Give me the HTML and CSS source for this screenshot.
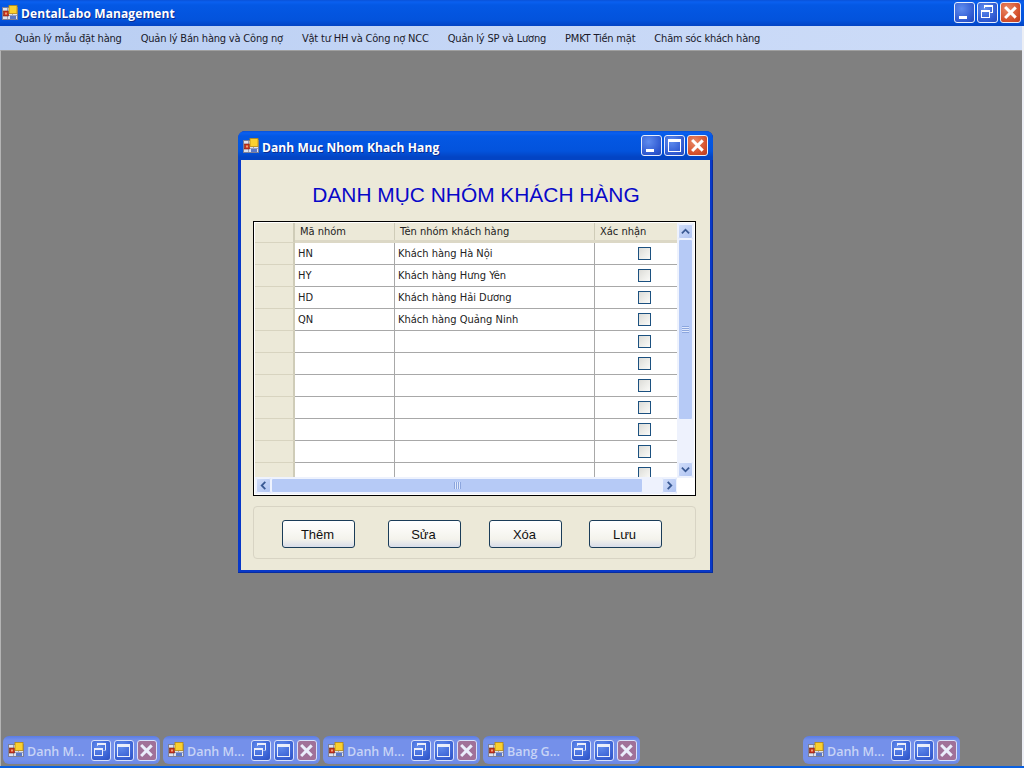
FILE: index.html
```html
<!DOCTYPE html>
<html lang="vi">
<head>
  <meta charset="UTF-8">
  <title>DentalLabo Management</title>
  <link rel="stylesheet" href="styles.css">
</head>
<body>
  <!-- shared window icon -->
  <svg class="defs" width="0" height="0">
    <symbol id="app-icon" viewBox="0 0 16 16">
      <rect x="0.5" y="2.5" width="15" height="12" fill="#dfe3ee" stroke="#7c7f98"/>
      <path d="M1 10.5h14M5.500 3v11M10.500 9v5" stroke="#9aa0bc" fill="none"/>
      <rect x="1.500" y="6" width="5" height="5" fill="#c8301c" stroke="#782010" stroke-width="0.6"/>
      <rect x="3" y="7.500" width="2" height="2" fill="#f0a070"/>
      <rect x="7" y="0.500" width="8" height="8" fill="#fad030" stroke="#b88810" stroke-width="0.8"/>
      <rect x="8" y="11" width="6" height="3" fill="#5a78c8"/>
    </symbol>
  </svg>

  <div class="app">
    <header class="titlebar">
      <svg class="win-icon"><use href="#app-icon"/></svg>
      <span class="title-text">DentalLabo Management</span>
      <div class="win-btns">
        <span class="win-btn"><i class="g-min"></i></span>
        <span class="win-btn"><i class="g-restore"></i></span>
        <span class="win-btn close"><i class="g-x"></i></span>
      </div>
    </header>

    <nav class="menubar">
      <a>Quản lý mẫu đặt hàng</a>
      <a>Quản lý Bán hàng và Công nợ</a>
      <a>Vật tư HH và Công nợ NCC</a>
      <a>Quản lý SP và Lương</a>
      <a>PMKT Tiền mặt</a>
      <a>Chăm sóc khách hàng</a>
    </nav>

    <main class="mdi">
      <!-- open child window -->
      <section class="dialog">
        <div class="titlebar dialog-title">
          <svg class="win-icon"><use href="#app-icon"/></svg>
          <span class="title-text">Danh Muc Nhom Khach Hang</span>
          <div class="win-btns">
            <span class="win-btn"><i class="g-min"></i></span>
            <span class="win-btn"><i class="g-max"></i></span>
            <span class="win-btn close"><i class="g-x"></i></span>
          </div>
        </div>
        <div class="dialog-body">
          <h1 class="heading">DANH MỤC NHÓM KHÁCH HÀNG</h1>

          <div class="grid-box">
            <div class="grid-top">
              <div class="grid-view">
                <table class="grid">
                  <colgroup>
                    <col class="c-head"><col class="c-ma"><col class="c-ten"><col class="c-xn">
                  </colgroup>
                  <thead>
                    <tr><th class="row-head"></th><th>Mã nhóm</th><th>Tên nhóm khách hàng</th><th>Xác nhận</th></tr>
                  </thead>
                  <tbody>
                    <tr><td class="row-head"></td><td>HN</td><td>Khách hàng Hà Nội</td><td><span class="check"></span></td></tr>
                    <tr><td class="row-head"></td><td>HY</td><td>Khách hàng Hưng Yên</td><td><span class="check"></span></td></tr>
                    <tr><td class="row-head"></td><td>HD</td><td>Khách hàng Hải Dương</td><td><span class="check"></span></td></tr>
                    <tr><td class="row-head"></td><td>QN</td><td>Khách hàng Quảng Ninh</td><td><span class="check"></span></td></tr>
                    <tr><td class="row-head"></td><td></td><td></td><td><span class="check"></span></td></tr>
                    <tr><td class="row-head"></td><td></td><td></td><td><span class="check"></span></td></tr>
                    <tr><td class="row-head"></td><td></td><td></td><td><span class="check"></span></td></tr>
                    <tr><td class="row-head"></td><td></td><td></td><td><span class="check"></span></td></tr>
                    <tr><td class="row-head"></td><td></td><td></td><td><span class="check"></span></td></tr>
                    <tr><td class="row-head"></td><td></td><td></td><td><span class="check"></span></td></tr>
                    <tr><td class="row-head"></td><td></td><td></td><td><span class="check"></span></td></tr>
                  </tbody>
                </table>
              </div>
              <div class="vscroll">
                <span class="sb-btn"><svg viewBox="0 0 10 6"><path d="M1 5l4-4 4 4" /></svg></span>
                <span class="sb-thumb v"><i class="grip-v"></i></span>
                <span class="sb-track"></span>
                <span class="sb-btn"><svg viewBox="0 0 10 6"><path d="M1 1l4 4 4-4" /></svg></span>
              </div>
            </div>
            <div class="hscroll">
              <span class="sb-btn"><svg viewBox="0 0 6 10"><path d="M5 1L1 5l4 4" /></svg></span>
              <span class="sb-thumb h"><i class="grip-h"></i></span>
              <span class="sb-track"></span>
              <span class="sb-btn"><svg viewBox="0 0 6 10"><path d="M1 1l4 4-4 4" /></svg></span>
              <span class="sb-corner"></span>
            </div>
          </div>

          <div class="group">
            <button class="btn b1">Thêm</button>
            <button class="btn b2">Sửa</button>
            <button class="btn b3">Xóa</button>
            <button class="btn b4">Lưu</button>
          </div>
        </div>
      </section>

      <!-- minimized child windows -->
      <div class="min-strip">
        <div class="min-win">
          <svg class="win-icon"><use href="#app-icon"/></svg><span class="min-text">Danh M...</span>
          <span class="win-btn"><i class="g-restore"></i></span><span class="win-btn"><i class="g-max"></i></span><span class="win-btn close"><i class="g-x"></i></span>
        </div>
        <div class="min-win">
          <svg class="win-icon"><use href="#app-icon"/></svg><span class="min-text">Danh M...</span>
          <span class="win-btn"><i class="g-restore"></i></span><span class="win-btn"><i class="g-max"></i></span><span class="win-btn close"><i class="g-x"></i></span>
        </div>
        <div class="min-win">
          <svg class="win-icon"><use href="#app-icon"/></svg><span class="min-text">Danh M...</span>
          <span class="win-btn"><i class="g-restore"></i></span><span class="win-btn"><i class="g-max"></i></span><span class="win-btn close"><i class="g-x"></i></span>
        </div>
        <div class="min-win">
          <svg class="win-icon"><use href="#app-icon"/></svg><span class="min-text">Bang G...</span>
          <span class="win-btn"><i class="g-restore"></i></span><span class="win-btn"><i class="g-max"></i></span><span class="win-btn close"><i class="g-x"></i></span>
        </div>
        <div class="min-win skip-slot">
          <svg class="win-icon"><use href="#app-icon"/></svg><span class="min-text">Danh M...</span>
          <span class="win-btn"><i class="g-restore"></i></span><span class="win-btn"><i class="g-max"></i></span><span class="win-btn close"><i class="g-x"></i></span>
        </div>
      </div>
    </main>
  </div>
</body>
</html>
```

FILE: styles.css
```css
/* Global */
html, body {
  margin: 0;
  padding: 0;
  height: 100%;
  overflow: hidden;
}
body {
  width: 1024px;
  height: 768px;
  font-family: "DejaVu Sans", sans-serif;
  font-size: 11px;
  font-stretch: condensed;
  background: #0a60e0;
}
.defs {
  position: absolute;
}
.app {
  display: flex;
  flex-direction: column;
  height: 766px;
  background: #eceef4;
}

/* Title bars */
.titlebar {
  display: flex;
  align-items: center;
  height: 26px;
  flex: none;
  box-sizing: border-box;
  padding: 0 3px 1px 2px;
  background: linear-gradient(#0a52d8 0, #0a60f0 2px, #0458e4 5px, #0353dc 20px, #0344c4 26px);
}
.win-icon {
  width: 16px;
  height: 16px;
  flex: none;
}
.title-text {
  margin-left: 3px;
  padding-top: 1px;
  font-family: "Open Sans", sans-serif;
  font-size: 12px;
  font-weight: 700;
  font-stretch: normal;
  letter-spacing: 0.1px;
  color: #fff;
  text-shadow: 1px 1px 0 #0a2c90;
  white-space: nowrap;
}
.win-btns {
  margin-left: auto;
  display: flex;
  gap: 2px;
}
.win-btn {
  display: block;
  position: relative;
  flex: none;
  width: 19px;
  height: 19px;
  border: 1px solid #e8eefc;
  border-radius: 3px;
  background: radial-gradient(circle at 35% 30%, #5f8cee, #2e58d0 70%, #2448b8);
}
.win-btn.close {
  background: radial-gradient(circle at 35% 30%, #ea8a68, #d4502c 65%, #b83a20);
}
.win-btn i {
  position: absolute;
  display: block;
  box-sizing: border-box;
}
.g-min {
  left: 4px;
  bottom: 3px;
  width: 8px;
  height: 3px;
  background: #fff;
}
.g-max {
  left: 3px;
  top: 3px;
  width: 13px;
  height: 13px;
  border: 1px solid #fff;
  border-top-width: 3px;
}
.g-restore {
  left: 3px;
  top: 7px;
  width: 9px;
  height: 8px;
  border: 1px solid #fff;
  border-top-width: 2px;
}
.g-restore::before {
  content: "";
  position: absolute;
  left: 2px;
  top: -7px;
  width: 9px;
  height: 8px;
  box-sizing: border-box;
  border: 1px solid #fff;
  border-top-width: 2px;
  clip-path: polygon(0 0, 100% 0, 100% 100%, 70% 100%, 70% 40%, 0 40%);
}
.g-x {
  left: 3px;
  top: 3px;
  width: 13px;
  height: 13px;
}
.g-x::before, .g-x::after {
  content: "";
  position: absolute;
  left: 5px;
  top: -1px;
  width: 2.5px;
  height: 15px;
  background: #fff;
  transform: rotate(45deg);
}
.g-x::after {
  transform: rotate(-45deg);
}

/* Menu */
.menubar {
  display: flex;
  align-items: center;
  height: 24px;
  flex: none;
  margin-right: 2px;
  padding-left: 7px;
  gap: 3px;
  background: linear-gradient(90deg, #b8cdf2, #c6d7f6 50%, #cddcf8);
  color: #1a1a2a;
  letter-spacing: -0.2px;
}
.menubar a {
  padding: 0 8px;
  white-space: nowrap;
}

/* MDI area */
.mdi {
  position: relative;
  flex: 1;
  margin-right: 2px;
  background: #808080;
  border-top: 1px solid #a0a0a0;
  border-left: 1px solid #b4b4b4;
  display: flex;
  flex-direction: column;
  justify-content: flex-end;
}
.dialog {
  position: absolute;
  left: 237px;
  top: 80px;
  width: 475px;
  height: 442px;
  box-sizing: border-box;
  display: flex;
  flex-direction: column;
  border-radius: 7px 7px 0 0;
  background: #0838c8;
  padding: 0 3px 3px;
  box-shadow: inset -1px -1px 0 #062ca0;
}
.dialog-title {
  height: 29px;
  margin: 0 -3px;
  padding: 0 5px 0 5px;
  border-radius: 7px 7px 0 0;
}
.dialog-title .title-text {
  padding-top: 3px;
}
.dialog-body {
  flex: 1;
  background: #ece9d8;
  padding: 0 14px 0 12px;
  display: flex;
  flex-direction: column;
}
.heading {
  margin: 22px 0 13px 3px;
  text-align: center;
  font-family: "Liberation Sans", sans-serif;
  font-size: 20.9px;
  font-stretch: normal;
  line-height: 26px;
  font-weight: 400;
  color: #0808c8;
}

/* Grid */
.grid-box {
  height: 275px;
  box-sizing: border-box;
  border: 1px solid #000;
  padding: 1px;
  background: #fff;
  display: flex;
  flex-direction: column;
}
.grid-top {
  flex: 1;
  display: flex;
  min-height: 0;
}
.grid-view {
  flex: 1;
  overflow: hidden;
  min-width: 0;
}
.grid {
  width: 423px;
  table-layout: fixed;
  border-collapse: separate;
  border-spacing: 0;
  font-size: 11px;
  color: #222;
}
.c-head { width: 40px; }
.c-ma { width: 100px; }
.c-ten { width: 200px; }
.c-xn { width: 83px; }
.grid th {
  height: 20px;
  padding: 0 0 0 5px;
  box-sizing: border-box;
  background: #ece9d8;
  border-bottom: 3px solid #dcd8c6;
  font-weight: 400;
  text-align: left;
  box-shadow: inset -1px 0 0 #cfccb8;
}
.grid td {
  height: 22px;
  box-sizing: border-box;
  padding: 0 0 0 3px;
  background: #fff;
  border-right: 1px solid #a8a8a8;
  border-bottom: 1px solid #a8a8a8;
  white-space: nowrap;
}
.grid td:last-child {
  border-right: 0;
  text-align: center;
  padding: 0 0 0 15px;
}
.grid .row-head {
  background: #ece9d8;
  border-right: 2px solid #cfccb8;
  border-bottom: 1px solid #d8d4c0;
  box-shadow: none;
}
.check {
  display: inline-block;
  vertical-align: middle;
  width: 13px;
  height: 13px;
  box-sizing: border-box;
  border: 1px solid #1c5180;
  background: linear-gradient(135deg, #dcdcd7, #fbfbf8);
}

/* Scrollbars */
.vscroll {
  width: 17px;
  flex: none;
  display: flex;
  flex-direction: column;
  background: #eef2fd;
  padding: 1px 1px 0;
  box-sizing: border-box;
}
.hscroll {
  height: 17px;
  flex: none;
  display: flex;
  background: #eef2fd;
  padding: 1px 0 0 1px;
  box-sizing: border-box;
}
.sb-btn {
  flex: none;
  width: 15px;
  height: 15px;
  border-radius: 2px;
  display: flex;
  align-items: center;
  justify-content: center;
  background: linear-gradient(135deg, #d2def9, #aec3f2);
  box-shadow: inset 0 0 0 1px #eef3fe;
}
.sb-btn svg {
  width: 9px;
  height: 9px;
  fill: none;
  stroke: #3a5a94;
  stroke-width: 2;
}
.sb-thumb {
  display: flex;
  align-items: center;
  justify-content: center;
  background: #b6caf6;
  box-sizing: border-box;
  border: 1px solid #eef3fe;
  border-radius: 2px;
}
.sb-thumb.v {
  width: 15px;
  height: 181px;
  flex: none;
}
.sb-thumb.h {
  width: 372px;
  height: 15px;
  flex: none;
}
.sb-track {
  flex: 1;
}
.grip-v {
  width: 7px;
  height: 7px;
  background: repeating-linear-gradient(#8ca6de 0 1px, #dfe8fc 1px 2px);
}
.grip-h {
  width: 7px;
  height: 7px;
  background: repeating-linear-gradient(90deg, #8ca6de 0 1px, #dfe8fc 1px 2px);
}
.sb-corner {
  width: 17px;
  flex: none;
  background: #fff;
}

/* Buttons */
.group {
  margin-top: 10px;
  height: 53px;
  box-sizing: border-box;
  border: 1px solid #d8d4c4;
  border-radius: 4px;
  padding-top: 13px;
  display: flex;
}
.btn {
  width: 73px;
  height: 28px;
  padding: 0 2px 0 0;
  border: 1px solid #1a3c58;
  border-radius: 3px;
  background: linear-gradient(#fff, #f4f3ec 70%, #d8dce8);
  font-family: "Liberation Sans", sans-serif;
  font-size: 13px;
  font-stretch: normal;
  color: #111;
}
.b1 { margin-left: 28px; }
.b2 { margin-left: 33px; }
.b3 { margin-left: 28px; }
.b4 { margin-left: 27px; }

/* Minimized windows */
.min-strip {
  display: flex;
  gap: 3px;
  padding: 0 0 2px 2px;
}
.min-win {
  width: 157px;
  height: 28px;
  box-sizing: border-box;
  display: flex;
  align-items: center;
  padding: 0 3px 0 5px;
  gap: 3px;
  border-radius: 6px;
  background: linear-gradient(#5a7ce4, #7490ea 4px, #7490ea 24px, #6a86e4);
}
.min-text {
  flex: 1;
  padding-top: 2px;
  font-family: "Open Sans", sans-serif;
  font-size: 12.500px;
  font-stretch: normal;
  font-weight: 600;
  color: #c8d4f6;
  white-space: nowrap;
}
.min-win .win-btn {
  width: 18px;
  opacity: 0.85;
}
.min-win .win-btn i {
  margin-left: -1px;
}
.min-win .win-btn.close {
  background: #a86c8c;
}
.skip-slot {
  margin-left: 160px;
}
```
